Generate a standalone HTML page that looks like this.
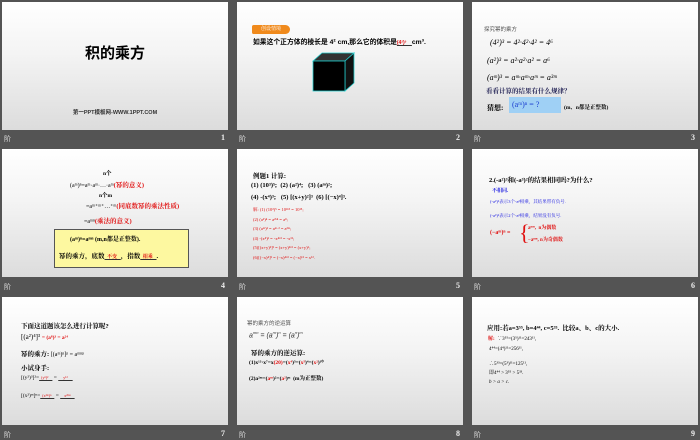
<!DOCTYPE html>
<html><head><meta charset="utf-8"><style>
*{margin:0;padding:0;box-sizing:border-box}
body{width:700px;height:438px;background:#545454;position:relative;overflow:hidden;font-family:"Liberation Serif","Noto Serif CJK SC","Noto Sans CJK SC",serif}
.s{position:absolute;width:226px;height:128px;background:linear-gradient(#fff 0%,#f4f4f4 40%,#dcdcdc 100%);overflow:hidden}
.s div,.s span.a{position:absolute;white-space:nowrap}
.lb{position:absolute;color:#ddd;font-size:7px;font-family:"Liberation Sans","Noto Sans CJK SC",sans-serif}
.n{position:absolute;color:#eee;font-size:8px;font-weight:bold}
.b{font-weight:bold}
.r{color:#e01010}
.bl{color:#1a1ae0}
.t{font-size:7px}
.k{font-family:"Liberation Sans","Noto Sans CJK SC",sans-serif}
</style></head><body>

<!-- slide 1 -->
<div class="s" style="left:2px;top:2px">
<div class="b k" style="left:0;width:226px;text-align:center;top:40px;font-size:15px">积的乘方</div>
<div class="b k" style="left:0;width:226px;text-align:center;top:106px;font-size:5.5px;color:#333">第一PPT模板网-WWW.1PPT.COM</div>
</div>
<!-- slide 2 -->
<div class="s" style="left:237px;top:2px">
<div style="left:15px;top:23px;width:38px;height:9px;background:#f08a1c;border-radius:2px 5px 5px 2px;color:#fff;font-size:5px;line-height:9px;text-align:center">创设情境</div>
<div class="b k" style="left:16px;top:34px;font-size:6.8px">如果这个正方体的棱长是 4² cm,那么它的体积是<span class="r" style="font-size:5px;text-decoration:underline;text-decoration-color:#333">(4²)³&nbsp;&nbsp;&nbsp;&nbsp;</span>cm³.</div>
<svg style="position:absolute;left:74px;top:49px" width="46" height="44"><polygon points="2,10 11,2 43,2 34,10" fill="#333" stroke="#2cc" stroke-width="0.8"/><polygon points="34,10 43,2 43,32 34,40" fill="#111" stroke="#2cc" stroke-width="0.8"/><rect x="2" y="10" width="32" height="30" fill="#000" stroke="#2cc" stroke-width="0.8"/></svg>
</div>
<!-- slide 3 -->
<div class="s" style="left:472px;top:2px">
<div class="k" style="left:12px;top:23px;font-size:5.5px;color:#555">探究幂的乘方</div>
<div style="left:18px;top:36px;font-size:8px;font-style:italic">(4²)³ = 4²·4²·4² = 4⁶</div>
<div style="left:15px;top:54px;font-size:8px;font-style:italic">(a²)³ = a²·a²·a² = a⁶</div>
<div style="left:15px;top:71px;font-size:8px;font-style:italic">(aᵐ)³ = aᵐ·aᵐ·aᵐ = a³ᵐ</div>
<div class="b" style="left:14px;top:84px;font-size:6.5px;color:#225">看看计算的结果有什么规律？</div>
<div class="b" style="left:15px;top:101px;font-size:7px">猜想:</div>
<div style="left:37px;top:95px;width:52px;height:16px;background:#9fd0f5;font-size:8px;line-height:16px;color:#1a3dd0;padding-left:3px">(aᵐ)ⁿ = ?</div>
<div class="b" style="left:92px;top:101px;font-size:5.5px">(m、n都是正整数)</div>
</div>

<!-- slide 4 -->
<div class="s" style="left:2px;top:149px">
<div class="b" style="left:101px;top:20px;font-size:5.5px">n个</div>
<div class="t" style="left:68px;top:31px;font-size:6px">(aᵐ)ⁿ=aᵐ·aᵐ·…·aᵐ<span class="r b" style="font-size:6.5px">(幂的意义)</span></div>
<div class="b" style="left:97px;top:42px;font-size:5.5px">n个m</div>
<div class="t" style="left:84px;top:52px;font-size:6px">=aᵐ⁺ᵐ⁺…⁺ᵐ<span class="r b" style="font-size:6.5px">(同底数幂的乘法性质)</span></div>
<div class="t" style="left:82px;top:67px;font-size:6px">=aᵐⁿ<span class="r b" style="font-size:6.5px">(乘法的意义)</span></div>
<div style="left:52px;top:80px;width:135px;height:39px;background:#fdf8a0;border:1px solid #555"></div>
<div class="b" style="left:68px;top:85px;font-size:6px">(aᵐ)ⁿ=aᵐⁿ (m,n都是正整数).</div>
<div class="b" style="left:57px;top:102px;font-size:6.5px">幂的乘方，底数<span class="r" style="font-size:5px;text-decoration:underline;text-decoration-color:#333">&nbsp;&nbsp;不变&nbsp;&nbsp;&nbsp;</span>，指数<span class="r" style="font-size:5px;text-decoration:underline;text-decoration-color:#333">&nbsp;&nbsp;相乘&nbsp;&nbsp;&nbsp;</span>.</div>
</div>
<!-- slide 5 -->
<div class="s" style="left:237px;top:149px">
<div class="b" style="left:16px;top:22px;font-size:6.5px">例题1 计算:</div>
<div class="b" style="left:14px;top:33px;font-size:6.5px">(1) (10³)⁵;&nbsp;&nbsp;(2) (a²)⁴;&nbsp;&nbsp;&nbsp;(3) (aᵐ)²;</div>
<div class="b" style="left:14px;top:45px;font-size:6.5px">(4) -(x⁴)³;&nbsp;&nbsp;&nbsp;(5) [(x+y)²]³&nbsp;&nbsp;(6) [(−x)⁴]³.</div>
<div class="r" style="left:16px;top:56px;font-size:4.5px;line-height:9.5px">解: (1) (10³)⁵ = 10³ˣ⁵ = 10¹⁵;<br>(2) (a²)⁴ = a²ˣ⁴ = a⁸;<br>(3) (aᵐ)² = aᵐ·² = a²ᵐ;<br>(4) -(x⁴)³ = -x⁴ˣ³ = -x¹²;<br>(5)[(x+y)²]³ = (x+y)²ˣ³ = (x+y)⁶;<br>(6)[(−x)⁴]³ = (−x)⁴ˣ³ = (−x)¹² = x¹².</div>
</div>
<!-- slide 6 -->
<div class="s" style="left:472px;top:149px">
<div class="b" style="left:17px;top:26px;font-size:6.5px">2.(-a²)³和(-a³)²的结果相同吗?为什么?</div>
<div class="bl b" style="left:20px;top:38px;font-size:5px">不相同.</div>
<div class="bl" style="left:18px;top:50px;font-size:4.5px">(-a²)³表示3个-a²相乘，其结果带有负号.</div>
<div class="bl" style="left:18px;top:64px;font-size:4.5px">(-a³)²表示2个-a³相乘，结果没有负号.</div>
<div class="r b" style="left:18px;top:81px;font-size:6px">(−aᵐ)ⁿ =</div>
<div class="r" style="left:47px;top:73px;font-size:22px;line-height:22px;font-weight:100">{</div>
<div class="r b" style="left:56px;top:75px;font-size:5px">aᵐⁿ,&nbsp;&nbsp;n为偶数</div>
<div class="r b" style="left:56px;top:87px;font-size:5px">−aᵐⁿ,&nbsp;n为奇偶数</div>
</div>

<!-- slide 7 -->
<div class="s" style="left:2px;top:297px">
<div class="b" style="left:19px;top:24px;font-size:6.5px">下面这道题该怎么进行计算呢?</div>
<div style="left:19px;top:36px;font-size:7px">[(a²)⁴]³ <span class="r b" style="font-size:5.5px">= (a⁸)³ = a²⁴</span></div>
<div class="b" style="left:19px;top:52px;font-size:6.5px">幂的乘方: <span style="font-weight:normal;font-size:6px">[(aᵐ)ⁿ]ᵖ = aᵐⁿᵖ</span></div>
<div class="b" style="left:19px;top:66px;font-size:6.5px">小试身手:</div>
<div style="left:19px;top:78px;font-size:5.5px">[(y²)³]²=<span class="r" style="font-size:4px;text-decoration:underline;text-decoration-color:#333">&nbsp;&nbsp;(y⁶)²&nbsp;&nbsp;&nbsp;&nbsp;</span> = <span class="r" style="font-size:4px;text-decoration:underline;text-decoration-color:#333">&nbsp;&nbsp;&nbsp;&nbsp;&nbsp;y¹²&nbsp;&nbsp;&nbsp;&nbsp;&nbsp;</span></div>
<div style="left:19px;top:96px;font-size:5.5px">[(x²)ᵐ]ⁿ=<span class="r" style="font-size:4px;text-decoration:underline;text-decoration-color:#333">&nbsp;&nbsp;(x²ᵐ)ⁿ&nbsp;&nbsp;&nbsp;</span> = <span class="r" style="font-size:4px;text-decoration:underline;text-decoration-color:#333">&nbsp;&nbsp;&nbsp;&nbsp;x²ᵐⁿ&nbsp;&nbsp;&nbsp;&nbsp;</span></div>
</div>
<!-- slide 8 -->
<div class="s" style="left:237px;top:297px">
<div class="k" style="left:10px;top:22px;font-size:5.5px;color:#555">幂的乘方的逆运算</div>
<div class="k" style="left:12px;top:33px;font-size:7px;color:#333;font-style:italic">a<sup style="font-size:4px">mn</sup> = (a<sup style="font-size:4px">m</sup>)<sup style="font-size:4px">n</sup> = (a<sup style="font-size:4px">n</sup>)<sup style="font-size:4px">m</sup></div>
<div class="b" style="left:14px;top:51px;font-size:6.5px">幂的乘方的逆运算:</div>
<div class="b" style="left:12px;top:63px;font-size:5.5px">(1)x¹³·x⁷=x<span class="r">(20)</span>=(<span class="r">x⁴</span>)⁵=(<span class="r">x⁵</span>)⁴=(<span class="r">x²</span>)¹⁰</div>
<div class="b" style="left:12px;top:77px;font-size:5.5px">(2)a²ᵐ=(<span class="r">aᵐ</span>)²=(<span class="r">a²</span>)ᵐ&nbsp;&nbsp;(m为正整数)</div>
</div>
<!-- slide 9 -->
<div class="s" style="left:472px;top:297px">
<div class="b" style="left:15px;top:26px;font-size:6.5px">应用:若a=3⁵⁵, b=4⁴⁴, c=5³³.&nbsp;&nbsp;比较a、b、c的大小.</div>
<div style="left:16px;top:38px;font-size:5px"><span class="r b">解:</span>&nbsp;&nbsp;∵3⁵⁵=(3⁵)¹¹=243¹¹,</div>
<div style="left:17px;top:50px;font-size:5px">4⁴⁴=(4⁴)¹¹=256¹¹,</div>
<div style="left:17px;top:63px;font-size:5px">∴5³³=(5³)¹¹=125¹¹,</div>
<div style="left:17px;top:72px;font-size:5px">即4⁴⁴ &gt; 3⁵⁵ &gt; 5³³.</div>
<div style="left:17px;top:83px;font-size:5px;font-style:italic">b &gt; a &gt; c.</div>
</div>

<!-- labels -->
<div class="lb" style="left:4px;top:134px">阶</div><div class="n" style="left:221px;top:133px">1</div>
<div class="lb" style="left:239px;top:134px">阶</div><div class="n" style="left:456px;top:133px">2</div>
<div class="lb" style="left:474px;top:134px">阶</div><div class="n" style="left:691px;top:133px">3</div>
<div class="lb" style="left:4px;top:282px">阶</div><div class="n" style="left:221px;top:281px">4</div>
<div class="lb" style="left:239px;top:282px">阶</div><div class="n" style="left:456px;top:281px">5</div>
<div class="lb" style="left:474px;top:282px">阶</div><div class="n" style="left:691px;top:281px">6</div>
<div class="lb" style="left:4px;top:430px">阶</div><div class="n" style="left:221px;top:429px">7</div>
<div class="lb" style="left:239px;top:430px">阶</div><div class="n" style="left:456px;top:429px">8</div>
<div class="lb" style="left:474px;top:430px">阶</div><div class="n" style="left:691px;top:429px">9</div>
</body></html>
